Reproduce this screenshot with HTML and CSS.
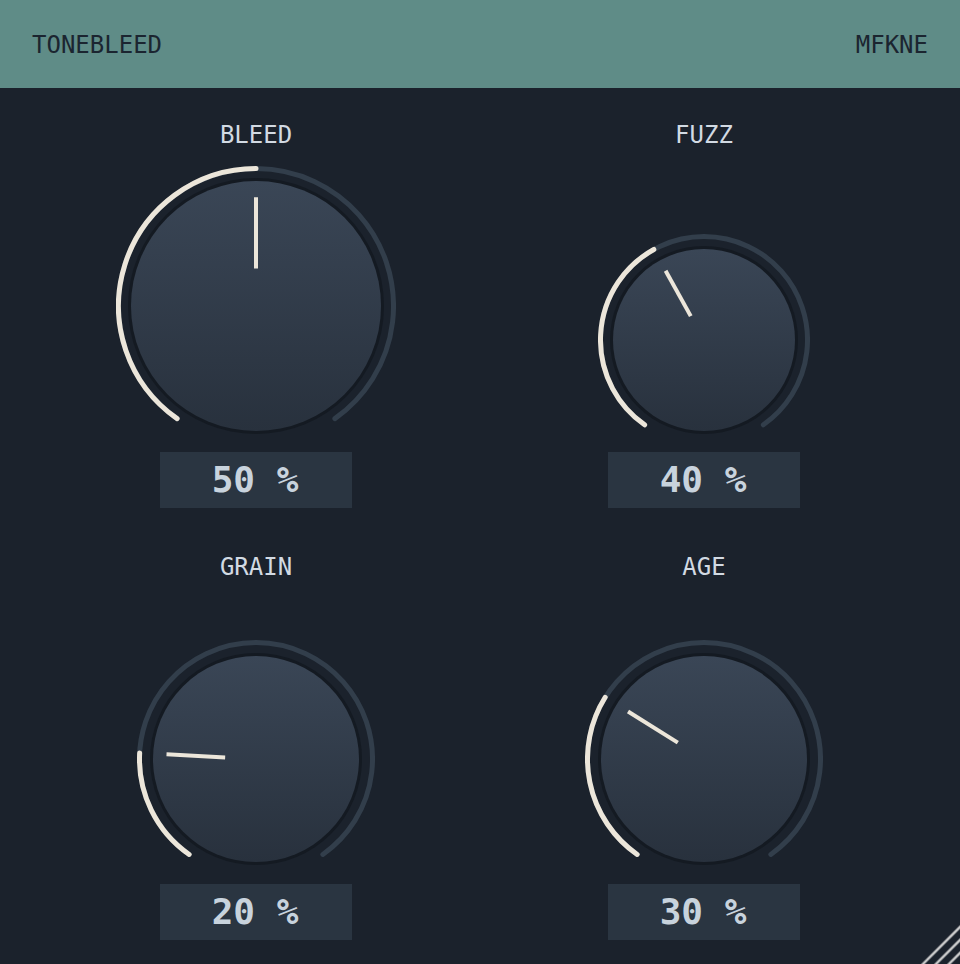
FILE: index.html
```html
<!DOCTYPE html>
<html>
<head>
<meta charset="utf-8">
<link rel="stylesheet" href="styles.css">
</head>
<body>
<header class="topbar">
  <span class="brand">TONEBLEED</span>
  <span class="maker">MFKNE</span>
</header>
<main class="panel">
  <section class="control">
    <div class="label">BLEED</div>
    <div class="knob-area">
      <svg class="knob" width="280" height="280" viewBox="0 0 280 280">
        <defs><linearGradient id="g1" x1="0" y1="0" x2="0" y2="1"><stop offset="0" stop-color="#3a4656"/><stop offset="1" stop-color="#28313d"/></linearGradient></defs>
        <path class="track" d="M61.13 252.63 A137.5 137.5 0 1 1 218.87 252.63"/>
        <path class="fill" d="M61.13 252.63 A137.5 137.5 0 0 1 140 2.5"/>
        <circle class="rim" cx="140" cy="140" r="128"/>
        <circle cx="140" cy="140" r="125" fill="url(#g1)"/>
        <line class="pointer" x1="140" y1="102.5" x2="140" y2="31.25"/>
      </svg>
    </div>
    <div class="value">50 %</div>
  </section>
  <section class="control">
    <div class="label">FUZZ</div>
    <div class="knob-area">
      <svg class="knob" width="212" height="212" viewBox="0 0 212 212">
        <defs><linearGradient id="g2" x1="0" y1="0" x2="0" y2="1"><stop offset="0" stop-color="#3a4656"/><stop offset="1" stop-color="#28313d"/></linearGradient></defs>
        <path class="track" d="M46.63 190.78 A103.5 103.5 0 1 1 165.37 190.78"/>
        <path class="fill" d="M46.63 190.78 A103.5 103.5 0 0 1 55.82 15.48"/>
        <circle class="rim" cx="106" cy="106" r="94"/>
        <circle cx="106" cy="106" r="91" fill="url(#g2)"/>
        <line class="pointer" x1="92.76" y1="82.12" x2="67.6" y2="36.73"/>
      </svg>
    </div>
    <div class="value">40 %</div>
  </section>
  <section class="control">
    <div class="label">GRAIN</div>
    <div class="knob-area">
      <svg class="knob" width="238" height="238" viewBox="0 0 238 238">
        <defs><linearGradient id="g3" x1="0" y1="0" x2="0" y2="1"><stop offset="0" stop-color="#3a4656"/><stop offset="1" stop-color="#28313d"/></linearGradient></defs>
        <path class="track" d="M52.17 214.44 A116.5 116.5 0 1 1 185.83 214.44"/>
        <path class="fill" d="M52.17 214.44 A116.5 116.5 0 0 1 2.66 112.9"/>
        <circle class="rim" cx="119" cy="119" r="106"/>
        <circle cx="119" cy="119" r="103" fill="url(#g3)"/>
        <line class="pointer" x1="88.14" y1="117.38" x2="29.52" y2="114.31"/>
      </svg>
    </div>
    <div class="value">20 %</div>
  </section>
  <section class="control">
    <div class="label">AGE</div>
    <div class="knob-area">
      <svg class="knob" width="238" height="238" viewBox="0 0 238 238">
        <defs><linearGradient id="g4" x1="0" y1="0" x2="0" y2="1"><stop offset="0" stop-color="#3a4656"/><stop offset="1" stop-color="#28313d"/></linearGradient></defs>
        <path class="track" d="M52.17 214.44 A116.5 116.5 0 1 1 185.83 214.44"/>
        <path class="fill" d="M52.17 214.44 A116.5 116.5 0 0 1 20.2 57.27"/>
        <circle class="rim" cx="119" cy="119" r="106"/>
        <circle cx="119" cy="119" r="103" fill="url(#g4)"/>
        <line class="pointer" x1="92.8" y1="102.63" x2="43.02" y2="71.52"/>
      </svg>
    </div>
    <div class="value">30 %</div>
  </section>
</main>
<svg class="grip" width="40" height="40" viewBox="0 0 40 40">
  <g stroke="#6a6e74" stroke-width="3.4">
    <line x1="41" y1="2" x2="2" y2="41"/>
    <line x1="41" y1="15" x2="15" y2="41"/>
    <line x1="41" y1="28" x2="28" y2="41"/>
  </g>
  <g stroke="#cfcfcf" stroke-width="1.6">
    <line x1="41" y1="2" x2="2" y2="41"/>
    <line x1="41" y1="15" x2="15" y2="41"/>
    <line x1="41" y1="28" x2="28" y2="41"/>
  </g>
</svg>
</body>
</html>
```
FILE: styles.css
```css
html, body {
  margin: 0;
  padding: 0;
}
body {
  width: 960px;
  height: 964px;
  overflow: hidden;
  background: #1b222c;
  font-family: "DejaVu Sans Mono", "Liberation Mono", monospace;
  position: relative;
}
.topbar {
  height: 88px;
  background: #5f8c87;
  display: flex;
  align-items: center;
  justify-content: space-between;
  padding: 2px 32px 0;
  box-sizing: border-box;
  color: #1b2530;
  font-size: 24px;
  line-height: 28px;
}
.panel {
  display: grid;
  grid-template-columns: 1fr 1fr;
  row-gap: 45px;
  padding: 33px 32px 0;
}
.control {
  display: flex;
  flex-direction: column;
  align-items: center;
}
.label {
  color: #d2dae3;
  font-size: 24px;
  line-height: 28px;
  margin-bottom: 17px;
}
.knob-area {
  height: 280px;
  display: flex;
  align-items: flex-end;
  justify-content: center;
  margin-bottom: 6px;
}
.knob {
  display: block;
}
.track {
  fill: none;
  stroke: #323e4b;
  stroke-width: 5;
  stroke-linecap: round;
}
.fill {
  fill: none;
  stroke: #ece6da;
  stroke-width: 5;
  stroke-linecap: round;
}
.rim {
  fill: #141a22;
}
.pointer {
  stroke: #ece6da;
  stroke-width: 4;
}
.value {
  width: 192px;
  height: 56px;
  background: #2a3541;
  color: #c8d3dd;
  font-size: 36px;
  font-weight: bold;
  line-height: 56px;
  text-align: center;
  text-indent: -2px;
}
.grip {
  position: absolute;
  right: 0;
  bottom: 0;
  display: block;
}
```
